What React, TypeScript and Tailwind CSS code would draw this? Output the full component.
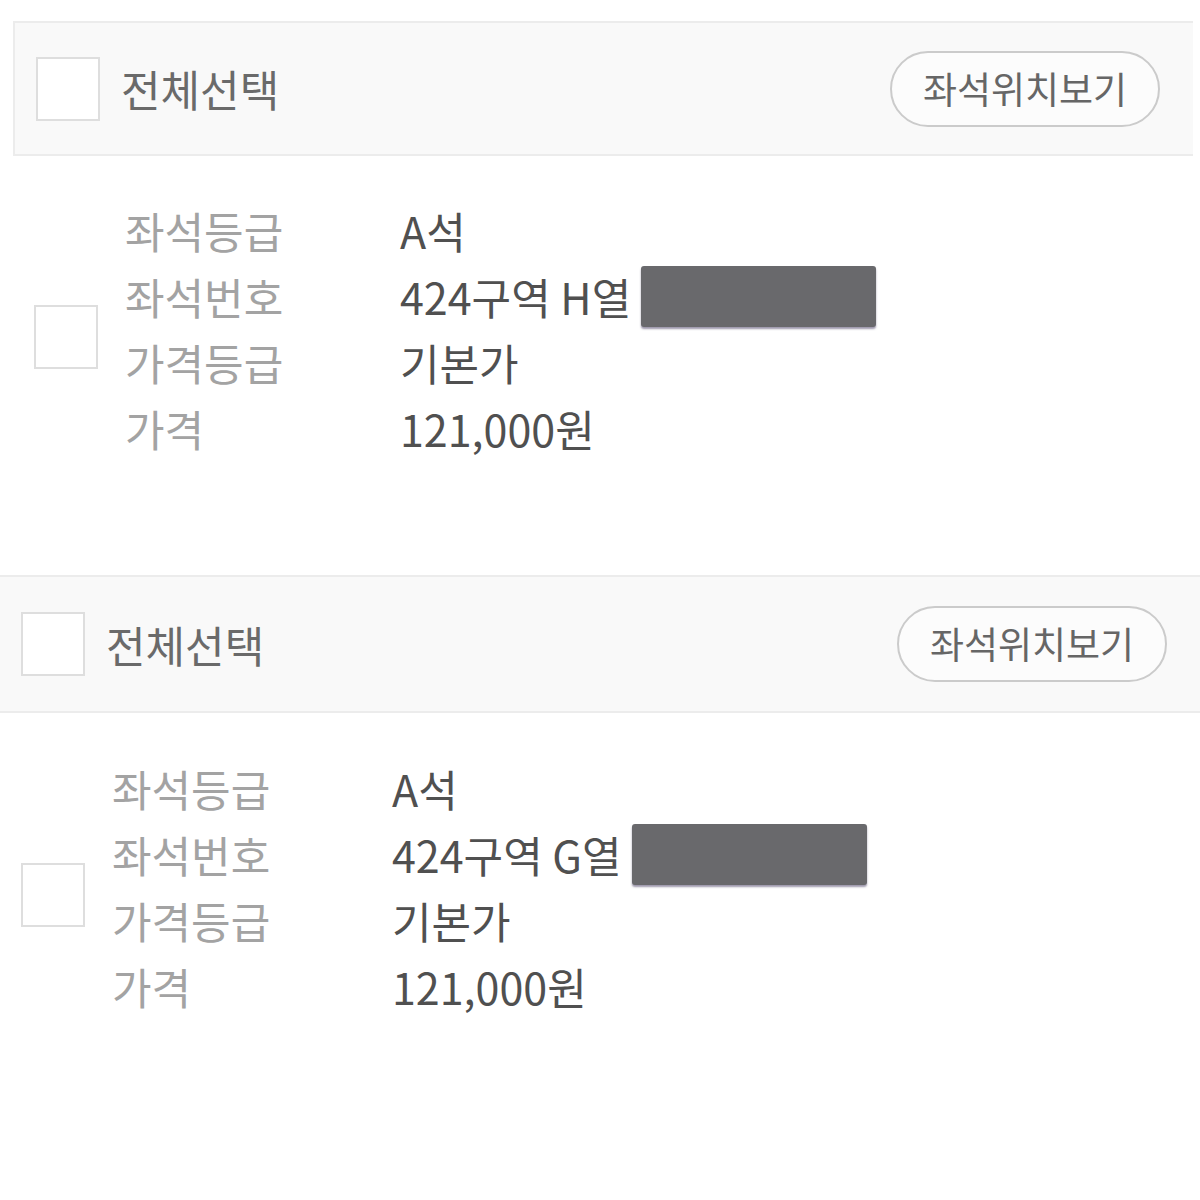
const font = { fontFamily: '"Noto Sans CJK KR", "Noto Sans", sans-serif' };

type Seat = { grade: string; section: string; row: string; priceGrade: string; price: string };

function Box() {
  return <div className="w-[64px] h-[64px] shrink-0 bg-white border-2 border-[#dedede]" />;
}

function SeatBlock({ seat, wide }: { seat: Seat; wide?: boolean }) {
  const labels = ['좌석등급', '좌석번호', '가격등급', '가격'];
  return (
    <div className={wide ? 'w-[1200px]' : 'ml-[13px] w-[1180px]'}>
      {/* header */}
      <div
        className={`flex items-center justify-between bg-[#f9f9f9] border-y-2 border-[#ececec] pl-[21px] pr-[33px] ${
          wide ? 'h-[138px]' : 'h-[135px] border-l-2'
        }`}
      >
        <div className="flex items-center gap-[21px]">
          <Box />
          <span className="text-[43px] leading-none text-[#6a6a6a]">전체선택</span>
        </div>
        <button className="h-[76px] w-[270px] rounded-full border-2 border-[#cbcbcb] bg-[#fcfcfc] text-[37px] text-[#666] flex items-center justify-center">
          좌석위치보기
        </button>
      </div>

      {/* body */}
      <div className={`flex pl-[21px] ${wide ? 'pt-[42px]' : 'pt-[41px] h-[419px]'}`}>
        <div className="mt-[108px]">
          <Box />
        </div>
        <div className="ml-[27px] flex">
          <div className={`${wide ? 'w-[280px]' : 'w-[275px]'} text-[43px] leading-[66px] text-[#a3a3a3]`}>
            {labels.map((l) => (
              <div key={l}>{l}</div>
            ))}
          </div>
          <div className="text-[43px] leading-[66px] text-[#505050]">
            <div>{seat.grade}</div>
            <div className="flex items-center">
              <span>
                {seat.section} {seat.row}
              </span>
              <div className="ml-[10px] w-[235px] h-[61px] rounded-[3px] bg-[#69696c] shadow-[0_2px_2px_rgba(60,50,90,0.5)]" />
            </div>
            <div>{seat.priceGrade}</div>
            <div>{seat.price}</div>
          </div>
        </div>
      </div>
    </div>
  );
}

export default function App() {
  const seats: Seat[] = [
    { grade: 'A석', section: '424구역', row: 'H열', priceGrade: '기본가', price: '121,000원' },
    { grade: 'A석', section: '424구역', row: 'G열', priceGrade: '기본가', price: '121,000원' },
  ];
  return (
    <div className="w-[1200px] h-[1200px] bg-white overflow-hidden pt-[21px]" style={font}>
      <SeatBlock seat={seats[0]} />
      <SeatBlock seat={seats[1]} wide />
    </div>
  );
}
